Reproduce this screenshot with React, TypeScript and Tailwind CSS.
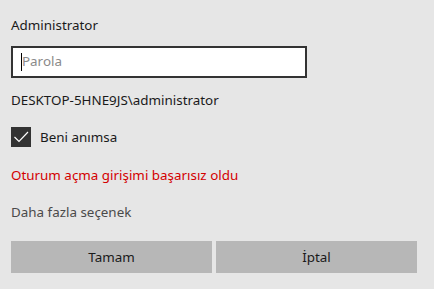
import React from 'react';

const App: React.FC = () => {
  return (
    <div
      className="w-[434px] h-[289px] bg-[#e6e6e6] text-[#000] flex flex-col px-[11px] pt-[15px] text-[13.4px]"
      style={{ fontFamily: '"Noto Sans", "Open Sans", sans-serif' }}
    >
      <div className="h-[20px] leading-[21px] text-[#1a1a1a]">Administrator</div>

      {/* Password field */}
      <div className="mt-[11px] w-[296px] h-[32px] border-2 border-[#333333] bg-white flex items-center pl-[8px]">
        <span className="w-px h-[18px] bg-black" />
        <span className="text-[#8a8a8a] leading-none">Parola</span>
      </div>

      <div className="mt-[12px] h-[20px] leading-[21px] text-[#1a1a1a]">DESKTOP-5HNE9JS\administrator</div>

      {/* Remember me */}
      <div className="mt-[17px] h-[20px] flex items-center">
        <div className="w-[20px] h-[20px] bg-[#333333]">
          <svg width="20" height="20" viewBox="0 0 20 20" fill="none">
            <path d="M3.5 10 L8 14.5 L17 5" stroke="#ffffff" strokeWidth="1.2" />
          </svg>
        </div>
        <span className="ml-[9px] leading-[20px] text-[#1a1a1a]">Beni anımsa</span>
      </div>

      <div className="mt-[18px] h-[20px] leading-[21px] text-[#d40000]">Oturum açma girişimi başarısız oldu</div>

      <div className="mt-[17px] h-[20px] leading-[21px] text-[#4a4a4a]">Daha fazla seçenek</div>

      {/* Actions */}
      <div className="mt-[19px] flex gap-[4px]">
        <button className="w-[201px] h-[32px] bg-[#b7b7b7] text-[#1a1a1a]">Tamam</button>
        <button className="w-[201px] h-[32px] bg-[#b7b7b7] text-[#1a1a1a]">İptal</button>
      </div>
    </div>
  );
};

export default App;
